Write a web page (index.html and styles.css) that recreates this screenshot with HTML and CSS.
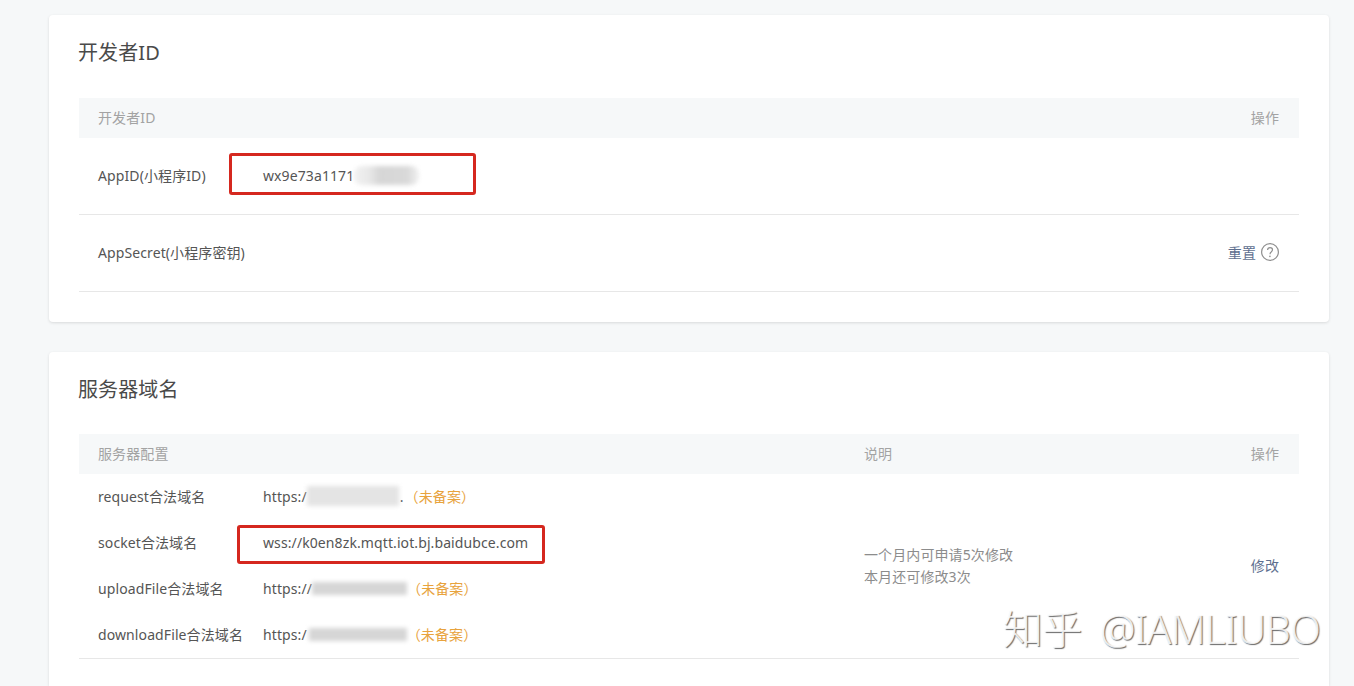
FILE: index.html
```html
<!DOCTYPE html>
<html lang="zh-CN">
<head>
    <meta charset="UTF-8">
    <meta name="viewport" content="width=device-width, initial-scale=1.0">
    <title>开发设置</title>
    <link rel="stylesheet" href="styles.css">
</head>
<body>
    <main class="page">
        <section class="card card-id">
            <h2 class="card-title">开发者ID</h2>
            <div class="table-head">
                <span>开发者ID</span>
                <span>操作</span>
            </div>
            <div class="id-row">
                <span class="label">AppID(小程序ID)</span>
                <span class="value">wx9e73a1171<i class="blur blur-appid"></i></span>
            </div>
            <div class="id-row">
                <span class="label">AppSecret(小程序密钥)</span>
                <span class="row-action">
                    <a class="link" href="#">重置</a>
                    <svg class="help" width="18" height="18" viewBox="0 0 18 18" fill="none" stroke="#8f8f8f">
                        <circle cx="9" cy="9" r="8.4" stroke-width="1.2"/>
                        <path d="M6.6 7.1c0-1.5 1.1-2.4 2.5-2.4s2.4.9 2.4 2.1c0 1-.5 1.5-1.3 2.1-.7.5-1.1 1-1.1 1.9v.5" stroke-width="1.2"/>
                        <circle cx="8.9" cy="13.4" r=".8" fill="#8f8f8f" stroke="none"/>
                    </svg>
                </span>
            </div>
            <!-- 红框标注 -->
            <div class="mark mark-appid"></div>
        </section>

        <section class="card card-server">
            <h2 class="card-title title-server">服务器域名</h2>
            <div class="table-head">
                <span>服务器配置</span>
                <span class="head-note">说明</span>
                <span>操作</span>
            </div>
            <div class="server-body">
                <div class="domains">
                    <div class="domain-row">
                        <span class="label">request合法域名</span>
                        <span class="value">https:/<i class="blur blur-request"></i><span class="dot">.</span><em class="unfiled unfiled-gap">（未备案）</em></span>
                    </div>
                    <div class="domain-row">
                        <span class="label">socket合法域名</span>
                        <span class="value">wss://k0en8zk.mqtt.iot.bj.baidubce.com</span>
                    </div>
                    <div class="domain-row">
                        <span class="label">uploadFile合法域名</span>
                        <span class="value">https://<i class="blur blur-domain"></i><em class="unfiled">（未备案）</em></span>
                    </div>
                    <div class="domain-row">
                        <span class="label">downloadFile合法域名</span>
                        <span class="value">https:/<i class="blur blur-domain blur-long"></i><em class="unfiled">（未备案）</em></span>
                    </div>
                </div>
                <div class="note">
                    <p>一个月内可申请5次修改</p>
                    <p>本月还可修改3次</p>
                </div>
                <a class="link server-action" href="#">修改</a>
            </div>
            <div class="mark mark-socket"></div>
        </section>
    </main>
    <div class="watermark">知乎 @IAMLIUBO</div>
</body>
</html>
```

FILE: styles.css
```css
html, body {
    height: 100%;
    overflow: hidden;
}
body {
    margin: 0;
    background-color: #f6f8f9;
    color: #555;
    font-family: "Noto Sans", "Noto Sans CJK SC", sans-serif;
    font-size: 14px;
    letter-spacing: 0.1px;
}
.page {
    height: 686px;
    box-sizing: border-box;
    padding: 15px 25px 0 49px;
}
.card {
    position: relative;
    background: white;
    border-radius: 4px;
    padding: 0 30px;
    margin-bottom: 30px;
    box-shadow: 0 1px 3px rgba(0,0,0,0.12);
}
.card-id {
    height: 307px;
}
.card-server {
    height: 334px;
    margin-bottom: 0;
    border-radius: 4px 4px 0 0;
}
.card-title {
    margin: 0 0 0 -1px;
    height: 83px;
    line-height: 76px;
    font-size: 20px;
    font-weight: 400;
    color: #4a4a4a;
}
.title-server {
    height: 82px;
}
.table-head {
    display: flex;
    justify-content: space-between;
    align-items: center;
    height: 40px;
    padding: 0 20px 2px 19px;
    box-sizing: border-box;
    background-color: #f6f8f9;
    color: #a3a3a3;
}
.head-note {
    position: absolute;
    left: 815px;
}
.id-row {
    display: flex;
    align-items: center;
    height: 74px;
    padding: 0 20px 2px 19px;
    border-bottom: 1px solid #e7e7e7;
}
.label {
    flex: 0 0 165px;
    white-space: nowrap;
}
.value {
    display: flex;
    align-items: center;
    white-space: nowrap;
}
.row-action {
    display: flex;
    align-items: center;
    gap: 5px;
    margin-left: auto;
}
.link {
    color: #5e6f8f;
    text-decoration: none;
}
.help {
    display: block;
}
.blur {
    display: inline-block;
    background-color: #d6d6d6;
    filter: blur(2px);
}
.blur-appid {
    width: 65px;
    height: 19px;
    border-radius: 8px;
    background: linear-gradient(90deg, #f1f1f1 0, #e9e9e9 22%, #d6d6d6 40%, #d9d9d9 82%, #f1f1f1 100%);
}
.blur-request {
    width: 92px;
    height: 20px;
    background-color: #e4e4e4;
}
.blur-domain {
    width: 95px;
    height: 13px;
}
.blur-long {
    width: 98px;
    margin-left: 2px;
}
.dot {
    margin-left: 1px;
}
.unfiled {
    font-style: normal;
    color: #e8a33d;
}
.unfiled-gap {
    margin-left: 1px;
}
.server-body {
    position: relative;
    display: flex;
    align-items: center;
    height: 184px;
    padding: 0 20px 0 19px;
    border-bottom: 1px solid #e7e7e7;
}
.domains {
    flex: 0 0 766px;
}
.domain-row {
    display: flex;
    align-items: center;
    height: 46px;
    padding-bottom: 2px;
    box-sizing: border-box;
}
.note {
    color: #8c8c8c;
    line-height: 22px;
}
.note p {
    margin: 0;
}
.server-action {
    margin-left: auto;
    margin-bottom: 2px;
}
.mark {
    position: absolute;
    border: 3px solid #d5281f;
    border-radius: 3px;
}
.mark-appid {
    left: 180px;
    top: 138px;
    width: 241px;
    height: 36px;
}
.mark-socket {
    left: 188px;
    top: 173px;
    width: 302px;
    height: 33px;
}
.watermark {
    position: absolute;
    left: 1003px;
    top: 604px;
    font-size: 40px;
    line-height: 50px;
    font-weight: 300;
    letter-spacing: -0.5px;
    word-spacing: 8px;
    white-space: nowrap;
    color: rgba(255,255,255,0.85);
    text-shadow: 1px 1px 1px rgba(80,80,80,0.85);
}
```
